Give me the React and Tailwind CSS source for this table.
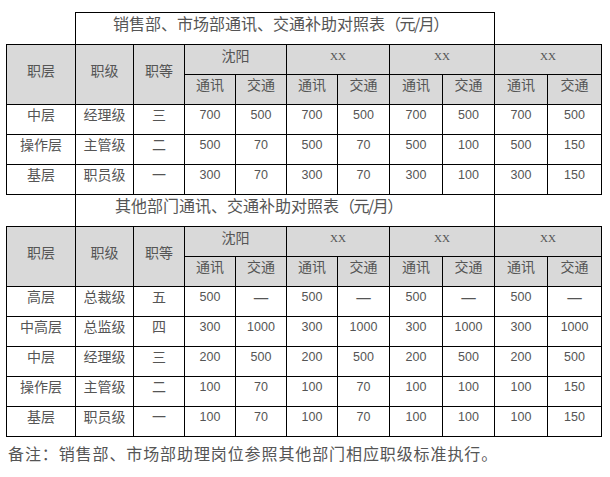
const cities = ["沈阳", "XX", "XX", "XX"];

const table1 = [
  ["中层", "经理级", "三", ["700", "500", "700", "500", "700", "500", "700", "500"]],
  ["操作层", "主管级", "二", ["500", "70", "500", "70", "500", "100", "500", "150"]],
  ["基层", "职员级", "一", ["300", "70", "300", "70", "300", "100", "300", "150"]],
];

const table2 = [
  ["高层", "总裁级", "五", ["500", "—", "500", "—", "500", "—", "500", "—"]],
  ["中高层", "总监级", "四", ["300", "1000", "300", "1000", "300", "1000", "300", "1000"]],
  ["中层", "经理级", "三", ["200", "500", "200", "500", "200", "500", "200", "500"]],
  ["操作层", "主管级", "二", ["100", "70", "100", "70", "100", "100", "100", "150"]],
  ["基层", "职员级", "一", ["100", "70", "100", "70", "100", "100", "100", "150"]],
];

const cell = "border border-black align-top text-center p-0";
const cjk = "font-['Noto_Sans_CJK_SC',sans-serif] text-[14px] leading-[18px]";
const num = "font-['Liberation_Sans',sans-serif] text-[12.5px] leading-[18px] pt-[1px]";
const dash = "font-['Noto_Sans_CJK_SC',sans-serif] text-[18px] leading-[18px]";

function Title({ text, indent }) {
  return (
    <tr className="h-[32px]">
      <td className="p-0" />
      <td
        colSpan={8}
        className={`border border-black align-top text-left p-0 ${indent} font-['Noto_Sans_CJK_SC',sans-serif] text-[16px] leading-[20px]`}
      >
        {text}
        <span className="tracking-[-1.5px]">（元/月）</span>
      </td>
      <td colSpan={2} className="p-0" />
    </tr>
  );
}

function Header() {
  return (
    <>
      <tr className="h-[30px]">
        {["职层", "职级", "职等"].map((h) => (
          <td key={h} rowSpan={2} className={`${cell} ${cjk} bg-[#d9d9d9] pt-[16px]`}>
            {h}
          </td>
        ))}
        {cities.map((c, i) =>
          c === "XX" ? (
            <td key={i} colSpan={2} className={`${cell} bg-[#d9d9d9] pt-[4px] font-['Liberation_Serif',serif] text-[11px] leading-[14px]`}>
              {c}
            </td>
          ) : (
            <td key={i} colSpan={2} className={`${cell} ${cjk} bg-[#d9d9d9] pt-[1px]`}>
              {c}
            </td>
          )
        )}
      </tr>
      <tr className="h-[30px]">
        {cities.flatMap((c, i) => [
          <td key={i + "a"} className={`${cell} ${cjk} bg-[#d9d9d9]`}>通讯</td>,
          <td key={i + "b"} className={`${cell} ${cjk} bg-[#d9d9d9]`}>交通</td>,
        ])}
      </tr>
    </>
  );
}

function Rows({ data }) {
  return data.map(([layer, grade, level, vals]) => (
    <tr key={layer + grade} className="h-[30px]">
      <td className={`${cell} ${cjk}`}>{layer}</td>
      <td className={`${cell} ${cjk}`}>{grade}</td>
      <td className={`${cell} ${cjk}`}>{level}</td>
      {vals.map((v, i) => (
        <td key={i} className={`${cell} ${v === "—" ? dash : num}`}>
          {v}
        </td>
      ))}
    </tr>
  ));
}

export default function App() {
  return (
    <div className="w-[610px] h-[477px] bg-white text-[#555] pl-[6px] pt-[12px]">
      <table className="table-fixed border-collapse w-[595px]">
        <colgroup>
          <col className="w-[69px]" />
          <col className="w-[58px]" />
          <col className="w-[51px]" />
          <col className="w-[51px]" />
          <col className="w-[51px]" />
          <col className="w-[51px]" />
          <col className="w-[52px]" />
          <col className="w-[53px]" />
          <col className="w-[52px]" />
          <col className="w-[53px]" />
          <col className="w-[54px]" />
        </colgroup>
        <tbody>
          <Title text="销售部、市场部通讯、交通补助对照表" indent="pl-[37px]" />
          <Header />
          <Rows data={table1} />
          <Title text="其他部门通讯、交通补助对照表" indent="pl-[39px]" />
          <Header />
          <Rows data={table2} />
        </tbody>
      </table>
      <p className="mt-[5px] pl-[2px] font-['Noto_Sans_CJK_SC',sans-serif] text-[16px] leading-[22px] tracking-[0.9px]">
        备注：销售部、市场部助理岗位参照其他部门相应职级标准执行。
      </p>
    </div>
  );
}
